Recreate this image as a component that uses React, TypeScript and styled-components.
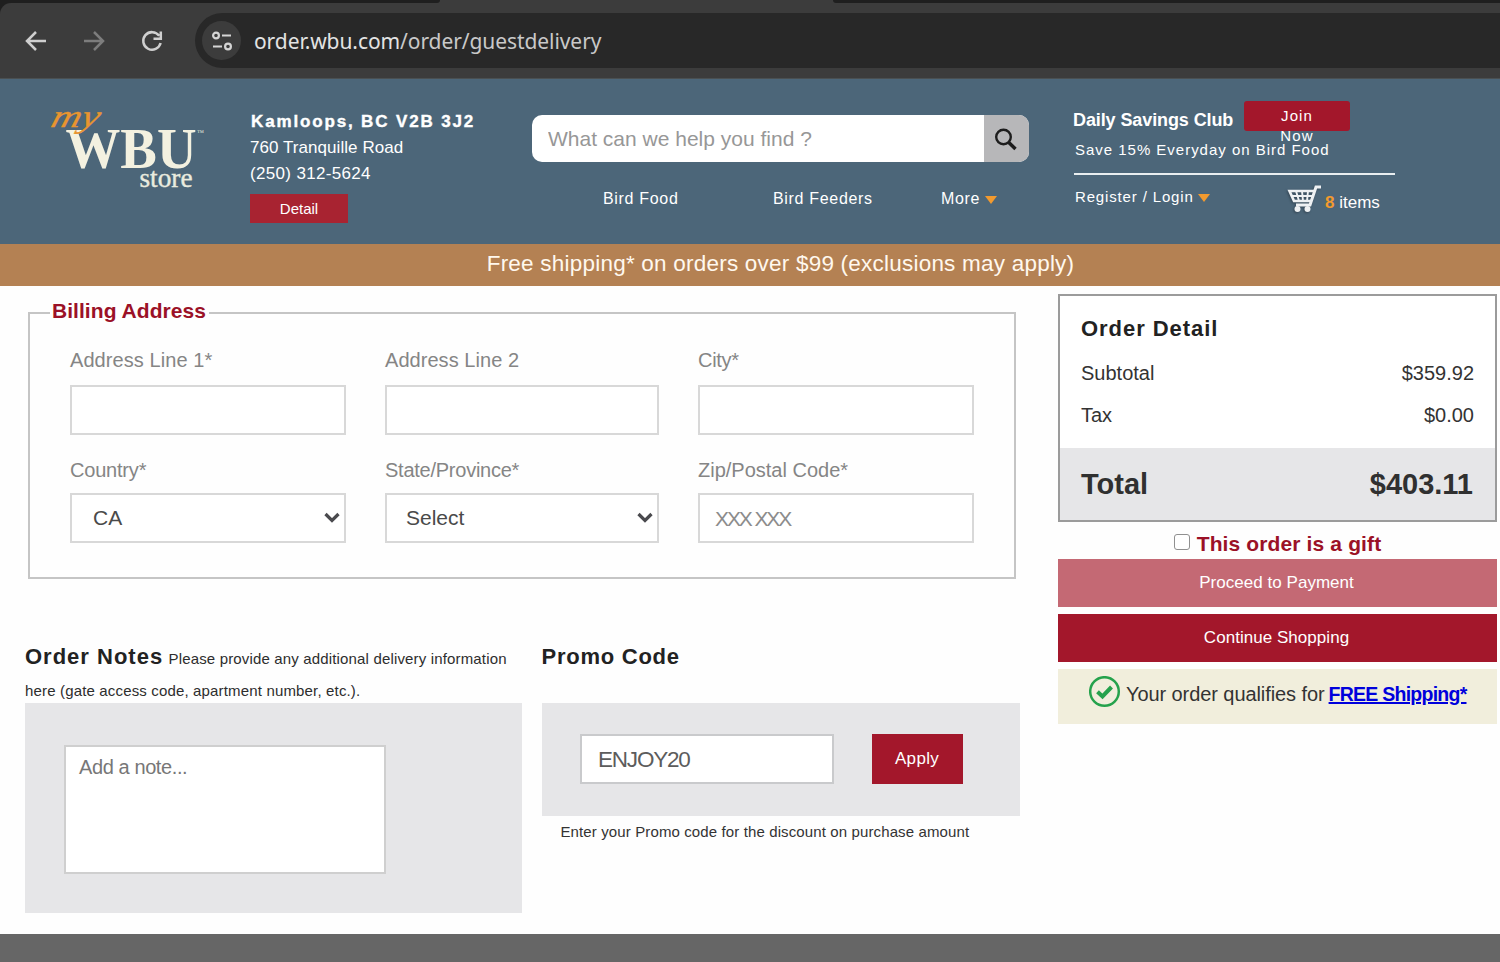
import React from 'react';
import styled, { createGlobalStyle } from 'styled-components';

const red = '#a3172b';
const orange = '#f29a2e';

const GlobalStyle = createGlobalStyle`
  * { box-sizing: border-box; }
  html, body { margin: 0; padding: 0; background: #fefefe; }
  body { font-family: "Liberation Sans", Arial, sans-serif; color: #333; overflow: hidden; }
  input, textarea, select, button { font-family: inherit; margin: 0; border-radius: 0; outline: none; }
`;

const Page = styled.div`
  width: 1500px;
  height: 962px;
  display: flex;
  flex-direction: column;
`;

/* ---------- browser chrome ---------- */

const Chrome = styled.div`
  height: 79px;
  flex: none;
  display: flex;
  flex-direction: column;
  background: #1f1f1f;
`;

const TabStrip = styled.div`
  height: 3px;
  display: flex;
  justify-content: space-between;
  background: #3c3c3c;
`;

const TabGap = styled.div<{ $w: number; $side: 'left' | 'right' }>`
  width: ${(p) => p.$w}px;
  background: #1f1f1f;
  border-radius: ${(p) => (p.$side === 'left' ? '0 0 6px 0' : '0 0 0 6px')};
`;

const Toolbar = styled.div`
  flex: 1;
  display: flex;
  align-items: flex-start;
  padding: 10px 0 0 22px;
  background: #3c3c3c;
  border-bottom: 1px solid #4a5052;
  border-top-left-radius: 11px;
`;

const NavIcon = styled.svg<{ $dim?: boolean }>`
  width: 28px;
  height: 28px;
  margin: 14px 30px 0 0;
  fill: none;
  stroke: ${(p) => (p.$dim ? '#7d7d7d' : '#cfcfcf')};
  stroke-width: 2.5;
`;

const AddressBar = styled.div`
  flex: 1;
  height: 55px;
  margin-left: -1px;
  padding-left: 7px;
  display: flex;
  align-items: center;
  background: #282828;
  border-radius: 28px 0 0 28px;
`;

const SiteInfo = styled.div`
  width: 39px;
  height: 39px;
  border-radius: 50%;
  background: #3c3c3c;
  display: flex;
  align-items: center;
  justify-content: center;
`;

const Url = styled.div`
  margin-left: 13px;
  font: 21px/30px "Noto Sans", sans-serif;
  letter-spacing: -0.08px;
  color: #e3e3e3;
  white-space: nowrap;
`;

const UrlPath = styled.span`
  color: #c9c9c9;
`;

/* ---------- store header ---------- */

const Header = styled.header`
  height: 165px;
  flex: none;
  display: grid;
  grid-template-columns: 250px 281px 498px 1fr;
  background: #4c6679;
  color: #fff;
`;

const Logo = styled.svg`
  margin: 21px 0 0 40px;
  width: 180px;
  height: 100px;
  overflow: visible;
  font-family: "Liberation Serif", serif;
`;

const StoreInfo = styled.div`
  padding-top: 30px;
  font-size: 17px;
  line-height: 26px;
  white-space: nowrap;
`;

const StoreName = styled.div`
  font-weight: bold;
  letter-spacing: 1.85px;
  padding-left: 1px;
  -webkit-text-stroke: 0.4px #fff;
`;

const StoreStreet = styled.div`
  letter-spacing: 0.06px;
`;

const StorePhone = styled.div`
  letter-spacing: 0.33px;
`;

const DetailButton = styled.button`
  display: block;
  width: 98px;
  height: 29px;
  margin-top: 7px;
  padding: 0;
  border: 0;
  background: #a82331;
  color: #fff;
  font-size: 15px;
`;

const SearchColumn = styled.div`
  padding-top: 36px;
`;

const SearchBar = styled.div`
  display: flex;
  height: 47px;
  border-radius: 10px;
  overflow: hidden;
  background: #fff;
  margin-left: 1px;
`;

const SearchInput = styled.input`
  flex: 1;
  border: 0;
  padding: 0 16px;
  font-size: 21px;
  background: transparent;
  &::placeholder { color: #979797; opacity: 1; }
`;

const SearchButton = styled.div`
  width: 45px;
  padding-right: 2px;
  display: flex;
  align-items: center;
  justify-content: center;
  background: #b7b7b9;
`;

const Nav = styled.nav`
  display: grid;
  grid-template-columns: 170px 168px auto;
  margin: 27px 0 0 72px;
  font-size: 16px;
  line-height: 20px;
  letter-spacing: 0.68px;
  white-space: nowrap;
`;

const Caret = styled.span<{ $gap: number }>`
  display: inline-block;
  margin-left: ${(p) => p.$gap}px;
  border: 6px solid transparent;
  border-top: 8px solid ${orange};
  border-bottom: 0;
`;

const Account = styled.div`
  width: 321px;
  margin-left: 45px;
  padding-top: 22px;
  white-space: nowrap;
`;

const ClubRow = styled.div`
  display: flex;
  height: 30px;
`;

const ClubTitle = styled.div`
  width: 170px;
  padding-top: 9px;
  margin-left: -1px;
  margin-right: 1px;
  font-weight: bold;
  font-size: 18px;
  line-height: 20px;
  letter-spacing: -0.1px;
`;

const JoinButton = styled.div`
  width: 106px;
  height: 30px;
  padding: 5px 25px 0;
  background: ${red};
  border-radius: 3px;
  font-size: 15px;
  line-height: 19.5px;
  letter-spacing: 1.1px;
  text-align: center;
  white-space: normal;
`;

const ClubNote = styled.div`
  padding: 9px 0 13px 1px;
  font-size: 15px;
  line-height: 20px;
  letter-spacing: 0.98px;
  border-bottom: 2px solid #e9eef0;
`;

const AccountRow = styled.div`
  display: flex;
  align-items: flex-start;
`;

const LoginLink = styled.div`
  width: 213px;
  padding: 12px 0 0 1px;
  font-size: 15px;
  line-height: 20px;
  letter-spacing: 0.85px;
`;

const CartIcon = styled.svg`
  width: 36px;
  height: 32px;
  margin-top: 9px;
  fill: none;
  filter: drop-shadow(-1px 1px 1px rgba(30, 40, 50, 0.5));
`;

const CartText = styled.div`
  padding: 18px 0 0 2px;
  font-size: 17px;
  line-height: 20px;
  b { color: ${orange}; }
`;

const Banner = styled.div`
  height: 42px;
  flex: none;
  padding-left: 61px;
  background: #b48153;
  color: #fff8ee;
  font-size: 22.5px;
  line-height: 40px;
  letter-spacing: 0.22px;
  text-align: center;
`;

/* ---------- main content ---------- */

const Main = styled.main`
  flex: 1;
  display: flex;
  align-items: flex-start;
`;

const Content = styled.div`
  width: 1058px;
  padding: 14px 0 0 25px;
`;

const Billing = styled.fieldset`
  width: 988px;
  height: 279px;
  margin: 0 0 0 3px;
  padding: 24px 0 0 40px;
  border: 2px solid #c5c5c5;
`;

const Legend = styled.legend`
  height: 26px;
  margin-left: -20px;
  padding: 0 3px 0 2px;
  font-weight: bold;
  font-size: 21px;
  line-height: 22px;
  letter-spacing: 0.05px;
  color: #9b1127;
`;

const Fields = styled.div`
  display: grid;
  grid-template-columns: 276px 274px 276px;
  column-gap: 39px;
`;

const Field = styled.label<{ $second?: boolean; $tracking?: number }>`
  display: flex;
  flex-direction: column;
  gap: ${(p) => (p.$second ? 13 : 15)}px;
  padding-top: ${(p) => (p.$second ? 25 : 0)}px;
  font-size: 20px;
  line-height: 20px;
  letter-spacing: ${(p) => p.$tracking ?? 0}px;
  color: #858585;
`;

const TextInput = styled.input`
  height: 50px;
  padding: 1px 15px 0;
  border: 2px solid #d8d8d8;
  background: #fff;
  font-size: 21px;
  color: #555;
  letter-spacing: -2.1px;
  &::placeholder { color: #8c8c8c; opacity: 1; }
`;

const SelectBox = styled.div`
  position: relative;
  display: flex;
`;

const Select = styled.select<{ $indent: number }>`
  appearance: none;
  width: 100%;
  height: 50px;
  padding: 0 0 2px ${(p) => p.$indent}px;
  border: 2px solid #d8d8d8;
  background: #fff;
  font-size: 21px;
  color: #4a4a4a;
`;

const Chevron = styled.svg`
  position: absolute;
  right: 6px;
  top: 18px;
  width: 16px;
  height: 13px;
  fill: none;
  stroke: #4a4a4e;
  stroke-width: 3.2;
`;

const Extras = styled.div`
  display: flex;
  gap: 19.5px;
  padding-top: 61px;
`;

const NotesSection = styled.section`
  width: 497px;
`;

const PromoSection = styled.section`
  width: 478px;
`;

const SectionHead = styled.div`
  height: 63px;
  padding-top: 0.6px;
  font-size: 15px;
  line-height: 32.4px;
  letter-spacing: 0.16px;
  color: #2d2d2d;
  white-space: nowrap;
`;

const SectionTitle = styled.span<{ $spacing: number }>`
  font-weight: bold;
  font-size: 22px;
  letter-spacing: ${(p) => p.$spacing}px;
  color: #222;
  margin-right: 1px;
`;

const NotesPanel = styled.div`
  height: 210px;
  padding: 42px 39px;
  background: #e6e6e8;
`;

const NoteArea = styled.textarea`
  display: block;
  width: 322px;
  height: 129px;
  padding: 9px 13px;
  border: 2px solid #cfcfcf;
  background: #fff;
  resize: none;
  font-size: 20px;
  line-height: 22px;
  letter-spacing: -0.4px;
  &::placeholder { color: #777; opacity: 1; }
`;

const PromoPanel = styled.div`
  display: flex;
  gap: 38px;
  height: 112.5px;
  padding: 31px 0 0 38.5px;
  background: #e6e6e8;
`;

const PromoInput = styled.input`
  width: 254px;
  height: 50px;
  padding: 2px 16px 0;
  border: 2px solid #c9cacc;
  background: #fff;
  font-size: 22.5px;
  letter-spacing: -1.2px;
  color: #5c5c5c;
`;

const ApplyButton = styled.button`
  width: 91px;
  height: 50px;
  padding: 0 1px 1px 0;
  border: 0;
  background: ${red};
  color: #fff;
  font-size: 17px;
  letter-spacing: 0.3px;
`;

const PromoNote = styled.div`
  padding: 6.5px 0 0 19px;
  font-size: 15px;
  line-height: 20px;
  letter-spacing: 0.12px;
  white-space: nowrap;
`;

/* ---------- order summary ---------- */

const Sidebar = styled.aside`
  width: 439px;
  padding-top: 8px;
`;

const Summary = styled.div`
  height: 228px;
  display: flex;
  flex-direction: column;
  border: 2px solid #9b9b9b;
  background: #fff;
`;

const SummaryTitle = styled.div`
  padding: 20px 21px 0;
  font-weight: bold;
  font-size: 22px;
  line-height: 26px;
  letter-spacing: 0.95px;
  color: #222;
`;

const SummaryRow = styled.div<{ $top: number }>`
  display: flex;
  justify-content: space-between;
  padding: ${(p) => p.$top}px 21px 0 21px;
  font-size: 20px;
  line-height: 22px;
`;

const TotalRow = styled.div`
  height: 72px;
  display: flex;
  justify-content: space-between;
  margin-top: 22px;
  padding: 0 22px 0 21px;
  background: #e6e6e8;
  font-weight: bold;
  font-size: 29px;
  line-height: 73px;
  color: #303030;
`;

const GiftRow = styled.label`
  height: 37px;
  display: flex;
  align-items: flex-start;
  justify-content: center;
  font-weight: bold;
  font-size: 21px;
  line-height: 24px;
  letter-spacing: 0.13px;
  padding-top: 10px;
  color: #9b1127;
`;

const GiftBox = styled.span`
  width: 16px;
  height: 16px;
  margin: 2px 7px 0 0;
  border: 1.5px solid #909090;
  border-radius: 3px;
  background: #fff;
`;

const ActionButton = styled.button<{ $faded?: boolean }>`
  display: block;
  width: 100%;
  height: 48px;
  margin-bottom: 7px;
  padding: 0 2px 1px 0;
  border: 0;
  background: ${(p) => (p.$faded ? '#c46974' : red)};
  color: #fff;
  font-size: 17px;
  letter-spacing: 0.04px;
`;

const Qualifies = styled.div`
  height: 55px;
  display: flex;
  padding: 7px 0 0 31px;
  background: #f1eedc;
  font-size: 20px;
  line-height: 36px;
  letter-spacing: -0.08px;
  white-space: nowrap;
`;

const CheckIcon = styled.svg`
  width: 32px;
  height: 32px;
  margin-right: 5px;
  fill: none;
  stroke: #25a24c;
`;

const ShippingLink = styled.a`
  margin-left: 4px;
  font-weight: bold;
  font-size: 19.5px;
  letter-spacing: -0.75px;
  color: #0000dc;
  text-decoration: underline;
  text-decoration-thickness: 2px;
`;

const Footer = styled.footer`
  height: 28px;
  flex: none;
  background: #666;
`;

export default function App() {
  return (
    <Page>
      <GlobalStyle />
      <Chrome>
        <TabStrip>
          <TabGap $w={440} $side="left" />
          <TabGap $w={667} $side="right" />
        </TabStrip>
        <Toolbar>
          <NavIcon viewBox="0 0 28 28"><path d="M24 14H5.5M14 5L5 14l9 9" /></NavIcon>
          <NavIcon viewBox="0 0 28 28" $dim><path d="M4 14h18.500M14 5l9 9-9 9" /></NavIcon>
          <NavIcon viewBox="0 0 28 28">
            <path d="M21.200 8.800A8.800 8.800 0 1 0 22.600 16M22.800 4.500v7.300h-7.300" />
          </NavIcon>
          <AddressBar>
            <SiteInfo>
              <svg width="22" height="22" viewBox="0 0 22 22" fill="none" stroke="#d5d5d5" strokeWidth="2.2">
                <circle cx="5" cy="5.500" r="2.900" />
                <path d="M11 5.500h9M2 16.500h9" />
                <circle cx="17" cy="16.500" r="2.900" />
              </svg>
            </SiteInfo>
            <Url>order.wbu.com<UrlPath>/order/guestdelivery</UrlPath></Url>
          </AddressBar>
        </Toolbar>
      </Chrome>

      <Header>
        <Logo viewBox="0 0 180 100">
          <text x="25.500" y="67.500" fontSize="58" fontWeight="bold" fill="#f3f1e0" textLength="131" lengthAdjust="spacingAndGlyphs">WBU</text>
          <text x="99.500" y="86.500" fontSize="27" fill="#e9ebdf" stroke="#e9ebdf" strokeWidth="0.4" textLength="53" lengthAdjust="spacingAndGlyphs">store</text>
          <text x="157" y="35" fontSize="7" fill="#e9ebdf">™</text>
          <text transform="translate(9.500 26.500) skewX(-16)" fontSize="32" fontStyle="italic" fill="#e8952f" stroke="#e8952f" strokeWidth="0.3" textLength="48" lengthAdjust="spacingAndGlyphs">my</text>
        </Logo>
        <StoreInfo>
          <StoreName>Kamloops, BC V2B 3J2</StoreName>
          <StoreStreet>760 Tranquille Road</StoreStreet>
          <StorePhone>(250) 312-5624</StorePhone>
          <DetailButton>Detail</DetailButton>
        </StoreInfo>
        <SearchColumn>
          <SearchBar>
            <SearchInput placeholder="What can we help you find ?" />
            <SearchButton>
              <svg width="24" height="24" viewBox="0 0 24 24" fill="none" stroke="#1d1d1d">
                <circle cx="9.500" cy="10" r="7.300" strokeWidth="2.400" />
                <path d="M14.800 15.500l6.700 6.500" strokeWidth="3.400" />
              </svg>
            </SearchButton>
          </SearchBar>
          <Nav>
            <span>Bird Food</span>
            <span>Bird Feeders</span>
            <span>More<Caret $gap={5} /></span>
          </Nav>
        </SearchColumn>
        <Account>
          <ClubRow>
            <ClubTitle>Daily Savings Club</ClubTitle>
            <JoinButton>Join Now</JoinButton>
          </ClubRow>
          <ClubNote>Save 15% Everyday on Bird Food</ClubNote>
          <AccountRow>
            <LoginLink>Register / Login<Caret $gap={4} /></LoginLink>
            <CartIcon viewBox="0 0 36 32">
              <g stroke="#eef1f3">
                <path d="M34 3h-5L23 21H9" strokeWidth="3" />
                <path d="M27 7H2.500L7 17h17" strokeWidth="2.600" />
                <path d="M4.500 12h21M9 7l3 10M15 7l1 10M21 7l-1 10" strokeWidth="1.900" />
              </g>
              <circle cx="10.500" cy="25" r="3" fill="#eef1f3" />
              <circle cx="20.500" cy="25" r="3" fill="#eef1f3" />
            </CartIcon>
            <CartText><b>8</b> items</CartText>
          </AccountRow>
        </Account>
      </Header>

      <Banner>Free shipping* on orders over $99 (exclusions may apply)</Banner>

      <Main>
        <Content>
          <Billing>
            <Legend>Billing Address</Legend>
            <Fields>
              <Field $tracking={0.07}>Address Line 1*<TextInput /></Field>
              <Field $tracking={0.05}>Address Line 2<TextInput /></Field>
              <Field $tracking={-0.3}>City*<TextInput /></Field>
              <Field $second $tracking={-0.2}>
                Country*
                <SelectBox>
                  <Select $indent={21}><option>CA</option></Select>
                  <Chevron viewBox="0 0 16 13"><path d="M1.500 3L8 9.500 14.500 3" /></Chevron>
                </SelectBox>
              </Field>
              <Field $second $tracking={-0.25}>
                State/Province*
                <SelectBox>
                  <Select $indent={19}><option>Select</option></Select>
                  <Chevron viewBox="0 0 16 13"><path d="M1.500 3L8 9.500 14.500 3" /></Chevron>
                </SelectBox>
              </Field>
              <Field $second>Zip/Postal Code*<TextInput placeholder="XXX XXX" /></Field>
            </Fields>
          </Billing>
          <Extras>
            <NotesSection>
              <SectionHead>
                <SectionTitle $spacing={1}>Order Notes</SectionTitle> Please provide any additional delivery information
                <br />
                here (gate access code, apartment number, etc.).
              </SectionHead>
              <NotesPanel><NoteArea placeholder="Add a note..." /></NotesPanel>
            </NotesSection>
            <PromoSection>
              <SectionHead><SectionTitle $spacing={0.75}>Promo Code</SectionTitle></SectionHead>
              <PromoPanel>
                <PromoInput defaultValue="ENJOY20" />
                <ApplyButton>Apply</ApplyButton>
              </PromoPanel>
              <PromoNote>Enter your Promo code for the discount on purchase amount</PromoNote>
            </PromoSection>
          </Extras>
        </Content>

        <Sidebar>
          <Summary>
            <SummaryTitle>Order Detail</SummaryTitle>
            <SummaryRow $top={20}><span>Subtotal</span><span>$359.92</span></SummaryRow>
            <SummaryRow $top={20}><span>Tax</span><span>$0.00</span></SummaryRow>
            <TotalRow><span>Total</span><span>$403.11</span></TotalRow>
          </Summary>
          <GiftRow><GiftBox />This order is a gift</GiftRow>
          <ActionButton $faded>Proceed to Payment</ActionButton>
          <ActionButton>Continue Shopping</ActionButton>
          <Qualifies>
            <CheckIcon viewBox="0 0 32 32">
              <circle cx="15.500" cy="15.500" r="14.300" strokeWidth="2.500" />
              <path d="M8.500 15.800l5 4.700 9-9.500" strokeWidth="4" />
            </CheckIcon>
            Your order qualifies for
            <ShippingLink>FREE Shipping*</ShippingLink>
          </Qualifies>
        </Sidebar>
      </Main>
      <Footer />
    </Page>
  );
}
